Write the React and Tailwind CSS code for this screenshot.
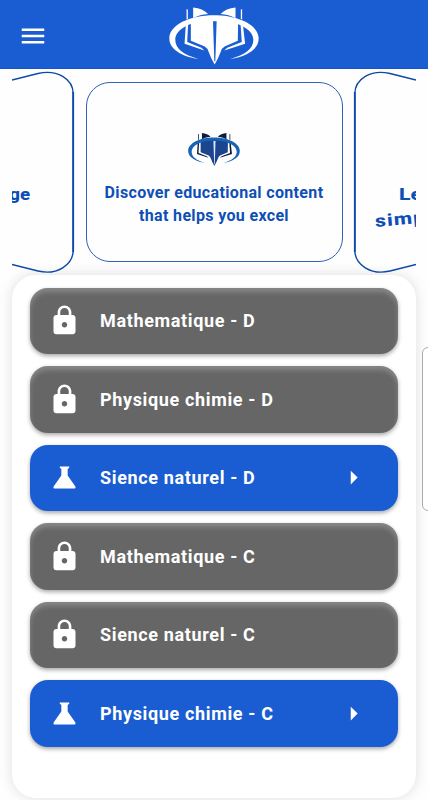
import React from "react";
import { MdMenu, MdLock, MdArrowRight } from "react-icons/md";

const subjects = [
  { name: "Mathematique - D", locked: true },
  { name: "Physique chimie - D", locked: true },
  { name: "Sience naturel - D", locked: false },
  { name: "Mathematique - C", locked: true },
  { name: "Sience naturel - C", locked: true },
  { name: "Physique chimie - C", locked: false },
];

const FoxLogo = ({ className, face, ring, ear, edge, gap }) => (
  <svg viewBox="56 20 272 175" className={className}>
    {/* ears */}
    <path d="M129 21Q158 23 174 41Q150 42 129 54Z" fill={ear} />
    <path d="M257 21Q228 23 212 41Q236 42 257 54Z" fill={ear} />
    <path d="M109 26L113 28V56L109 58Z" fill={ear} />
    <path d="M277 26L273 28V56L277 58Z" fill={ear} />
    {/* jaw edges */}
    <path d="M107 70L103 131L163 151L154 143L111 126L114 68Z" fill={edge} />
    <path d="M279 70L286 131L223 151L232 143L276 126L272 68Z" fill={edge} />
    {/* face */}
    <path
      d="M122 62Q192 44 265 62L264 122L224 139Q216 143 212 156Q205 176 194 194Q183 176 176 156Q172 143 164 139L122 122Z"
      fill={face}
    />
    <path d="M189 63H200L196 184H193Z" fill={gap} />
    {/* ring */}
    <path
      d="M145 177C92 169 57 146 57 115C57 75 117 45 192 45C267 45 327 75 327 115C327 146 294 169 241 177C286 165 311 146 311 119C311 85 257 60 192 60C127 60 75 85 75 119C75 146 100 165 145 177Z"
      fill={ring}
    />
  </svg>
);

const Flask = ({ className }) => (
  <svg viewBox="0 0 24 24" className={className} fill="currentColor">
    <path d="M8.700 4H15.300Q16 4.300 15.200 5.100L14.300 5.900V10.600L19.800 18.300Q20.500 19.900 19 20H5Q3.500 19.900 4.200 18.300L9.700 10.600V5.900L8.800 5.100Q8 4.300 8.700 4Z" />
  </svg>
);

const Header = () => (
  <header className="flex h-[69px] shrink-0 items-start justify-between border-b border-[#1554c4] bg-[#1a5dd2] px-[18px] text-white">
    <MdMenu className="mt-[21px] size-[30px]" />
    <FoxLogo
      className="mt-[7px] h-[58px] w-[90px]"
      face="#fff"
      ring="#fff"
      ear="#fff"
      edge="#fff"
      gap="#1a5dd2"
    />
    <div className="w-[30px]" />
  </header>
);

const Carousel = () => (
  <section className="mx-3 flex h-[206px] shrink-0 justify-between overflow-hidden text-[#0e4fb6]">
    <div className="relative w-[63px] overflow-hidden">
      <svg viewBox="12 69 63 206" className="h-[206px] w-[63px]" fill="none">
        <path
          d="M12 80L38 73.500C57 69 73.200 79 73.200 94V250C73.200 265 57 275.500 38 271L12 264.500"
          stroke="#0d4aa8"
          strokeWidth="1.4"
        />
        <path d="M73.200 92V252" stroke="#0d4aa8" strokeWidth="1.8" />
      </svg>
      <p className="absolute right-[45px] top-[113px] origin-right scale-x-110 whitespace-nowrap text-[17px] leading-6 font-extrabold">
        knowledge
      </p>
    </div>

    <div className="mt-[13px] flex h-[180px] w-[257px] flex-col items-center rounded-[24px] border border-[#2d62b4] pt-[49px]">
      <FoxLogo
        className="h-[35px] w-[52px]"
        face="#1c4590"
        ring="#1763b8"
        ear="#0c1e45"
        edge="#0a1a3a"
        gap="#dce8f8"
      />
      <p className="mt-[15px] whitespace-nowrap text-center text-[16px] leading-[22.5px] font-bold tracking-[0.34px]">
        Discover educational content
        <br />
        that helps you excel
      </p>
    </div>

    <div className="relative w-[63px] overflow-hidden">
      <svg viewBox="353 69 63 206" className="h-[206px] w-[63px]" fill="none">
        <path
          d="M416 80L390 73.500C371 69 354.800 79 354.800 94V250C354.800 265 371 275.500 390 271L416 264.500"
          stroke="#0d4aa8"
          strokeWidth="1.4"
        />
        <path d="M354.800 92V252" stroke="#0d4aa8" strokeWidth="1.8" />
      </svg>
      <p className="absolute left-[46px] top-[113px] origin-left scale-x-125 whitespace-nowrap text-[17px] leading-6 font-extrabold">
        Learn
      </p>
      <p className="absolute left-[22px] top-[140px] origin-left -rotate-5 scale-x-125 whitespace-nowrap text-[17px] leading-6 font-extrabold tracking-wider">
        simply
      </p>
    </div>
  </section>
);

const SubjectRow = ({ name, locked }) => (
  <button
    className={`flex h-[66.500px] w-full shrink-0 items-center rounded-[18px] pl-[18px] pr-[28px] text-white ${
      locked
        ? "bg-[#666] shadow-[0_2px_4px_rgba(0,0,0,0.35),inset_0_4px_5px_rgba(255,255,255,0.22)]"
        : "bg-[#1a5dd2] shadow-[0_2px_4px_rgba(0,0,0,0.35)]"
    }`}
  >
    {locked ? (
      <MdLock className="size-[33px]" />
    ) : (
      <Flask className="size-[33px]" />
    )}
    <span className="ml-[19px] text-[18px] font-bold tracking-[0.65px]">
      {name}
    </span>
    {!locked && <MdArrowRight className="ml-auto size-[33px]" />}
  </button>
);

export default function App() {
  return (
    <div className="relative flex h-[800px] w-[428px] flex-col overflow-hidden bg-[#fefefe] font-[Roboto,sans-serif]">
      <Header />
      <Carousel />
      <main className="mx-3 flex h-[523px] shrink-0 flex-col gap-3 rounded-[24px] bg-white px-[18px] pt-[12.500px] shadow-[0_0_14px_rgba(0,0,0,0.13)]">
        {subjects.map((s) => (
          <SubjectRow key={s.name} {...s} />
        ))}
      </main>
      {/* edge panel handle */}
      <div className="absolute -right-3 top-[347px] h-[164px] w-[18px] rounded-[6px] border border-[#aaa] bg-white" />
    </div>
  );
}
